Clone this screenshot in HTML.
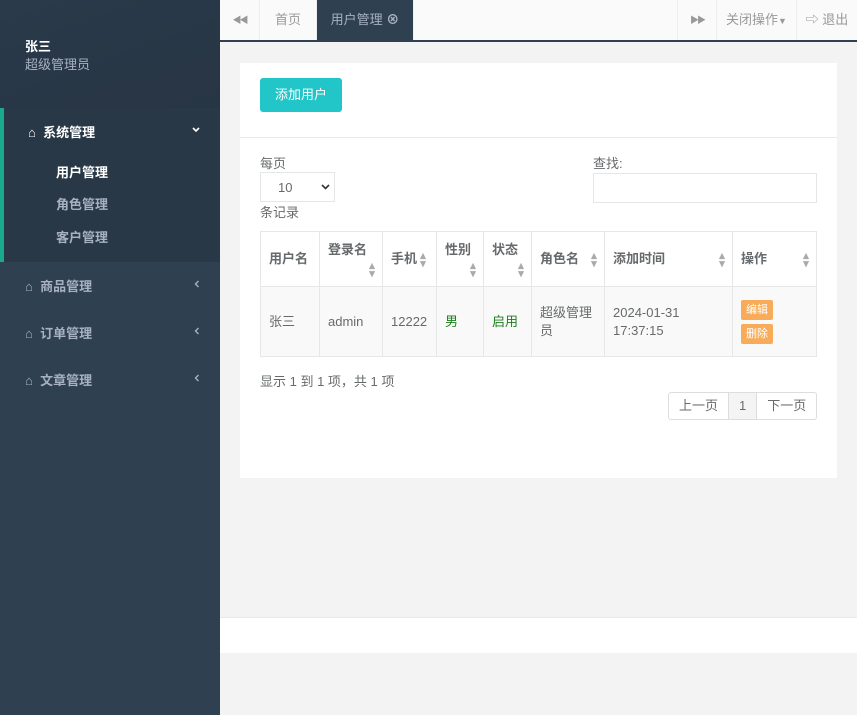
<!DOCTYPE html>
<html><head><meta charset="utf-8"><style>
*{box-sizing:border-box;margin:0;padding:0}
body{width:857px;height:715px;overflow:hidden;font-family:"Liberation Sans","Noto Sans CJK SC",sans-serif;font-size:13px;color:#676a6c;background:#f3f3f4;position:relative}
.side{position:absolute;left:0;top:0;width:220px;height:715px;background:#2f4050}
.prof{height:108px;background:linear-gradient(160deg,#2a3a4a,#273544);padding:38px 25px;line-height:18px}
.prof b{color:#fff;font-size:13px;display:block}
.prof span{color:#a7b1c2;font-size:13px}
.menu{position:absolute;left:0;width:220px;color:#a7b1c2;font-weight:bold;font-size:13px}
.act{top:108px;height:154px;background:#293846;border-left:4px solid #19aa8d}
.item{position:absolute;left:25px}
.arr{position:absolute;right:20px}
.main{position:absolute;left:220px;top:0;width:637px;height:715px}
.tabs{height:42px;background:#fafafa;border-bottom:2px solid #2f4050;position:relative}
.tabs div{position:absolute;top:0;height:40px;line-height:40px;border-right:1px solid #eee;color:#999;font-size:13px;text-align:center}
.panel{position:absolute;left:20px;top:63px;width:597px;height:415px;background:#fff}
.btn{position:absolute;left:20px;top:15px;width:82px;height:34px;background:#23c6c8;color:#fff;border-radius:3px;text-align:center;line-height:34px}
table{position:absolute;left:20px;top:168px;border-collapse:collapse;width:557px;table-layout:fixed}
td,th{border:1px solid #e7e7e7;padding:0 8px;text-align:left;vertical-align:middle;position:relative;line-height:18px}
th{height:55px;font-weight:bold;color:#676a6c}
tr.r td{height:70px;background:#f9f9f9}
.s{position:absolute;right:6px;color:#aaa;font-size:11px;line-height:8px;width:8px;text-align:center}
.lab{display:inline-block;background:#f8ac59;color:#fff;font-size:11px;padding:2px 5px;border-radius:2px;margin:2px 0;line-height:16px}
.foot{position:absolute;left:0;top:617px;width:637px;height:36px;background:#fff;border-top:1px solid #e7eaec}
</style></head><body>
<div class="side">
<div class="prof"><b>张三</b><span>超级管理员</span></div>
<div class="menu act">
<div class="item" style="top:14px;left:24px;color:#fff">⌂&nbsp; 系统管理</div>
<svg class="arr" style="top:19px" width="8" height="6" viewBox="0 0 8 6"><path d="M1 1l3 3 3-3" stroke="#fff" stroke-width="1.6" fill="none"/></svg>
<div class="item" style="top:54px;left:52px;color:#fff">用户管理</div>
<div class="item" style="top:86px;left:52px">角色管理</div>
<div class="item" style="top:119px;left:52px">客户管理</div>
</div>
<div class="menu" style="top:276px"><div class="item">⌂&nbsp; 商品管理</div><svg class="arr" style="top:4px" width="6" height="8" viewBox="0 0 6 8"><path d="M4.5 1l-3 3 3 3" stroke="#a7b1c2" stroke-width="1.4" fill="none"/></svg></div>
<div class="menu" style="top:323px"><div class="item">⌂&nbsp; 订单管理</div><svg class="arr" style="top:4px" width="6" height="8" viewBox="0 0 6 8"><path d="M4.5 1l-3 3 3 3" stroke="#a7b1c2" stroke-width="1.4" fill="none"/></svg></div>
<div class="menu" style="top:370px"><div class="item">⌂&nbsp; 文章管理</div><svg class="arr" style="top:4px" width="6" height="8" viewBox="0 0 6 8"><path d="M4.5 1l-3 3 3 3" stroke="#a7b1c2" stroke-width="1.4" fill="none"/></svg></div>
</div>
<div class="main">
<div class="tabs">
<div style="left:0;width:40px;font-size:9px;letter-spacing:-2px">◀◀</div>
<div style="left:40px;width:57px">首页</div>
<div style="left:97px;width:97px;background:#2f4050;color:#a7b1c2">用户管理 <b style="color:#a7b1c2">⊗</b></div>
<div style="left:457px;width:40px;border-left:1px solid #eee;font-size:9px;letter-spacing:-2px">▶▶</div>
<div style="left:497px;width:80px">关闭操作<span style="font-size:9px">▼</span></div>
<div style="left:577px;width:60px;border-right:none">⇨ 退出</div>
</div>
<div class="panel">
<div class="btn">添加用户</div>
<div style="position:absolute;left:0;top:74px;width:597px;border-top:1px solid #e7eaec"></div>
<div style="position:absolute;left:20px;top:90px">每页</div>
<div style="position:absolute;left:20px;top:109px;width:75px;height:30px;border:1px solid #e5e6e7;padding:7px 17px">10 <svg style="position:absolute;right:4px;top:11px" width="9" height="6" viewBox="0 0 9 6"><path d="M1 1l3.5 3.5L8 1" stroke="#333" stroke-width="1.6" fill="none"/></svg></div>
<div style="position:absolute;left:20px;top:139px">条记录</div>
<div style="position:absolute;left:353px;top:90px">查找:</div>
<div style="position:absolute;left:353px;top:110px;width:224px;height:30px;border:1px solid #e5e6e7"></div>
<table>
<colgroup><col style="width:59px"><col style="width:63px"><col style="width:54px"><col style="width:47px"><col style="width:48px"><col style="width:73px"><col style="width:128px"><col></colgroup>
<tr><th>用户名</th><th style="vertical-align:top;padding-top:9px">登录名<span class="s" style="top:30px">▴<br>▾</span></th><th>手机<span class="s" style="left:36px;top:20px">▴<br>▾</span></th><th style="vertical-align:top;padding-top:9px">性别<span class="s" style="top:30px">▴<br>▾</span></th><th style="vertical-align:top;padding-top:9px">状态<span class="s" style="top:30px">▴<br>▾</span></th><th>角色名<span class="s" style="top:20px">▴<br>▾</span></th><th>添加时间<span class="s" style="top:20px">▴<br>▾</span></th><th>操作<span class="s" style="top:20px">▴<br>▾</span></th></tr>
<tr class="r"><td>张三</td><td>admin</td><td>12222</td><td style="color:#1a7f1a">男</td><td style="color:#1a7f1a">启用</td><td>超级管理员</td><td>2024-01-31 17:37:15</td><td><span class="lab">编辑</span><br><span class="lab">删除</span></td></tr>
</table>
<div style="position:absolute;left:20px;top:308px">显示 1 到 1 项，共 1 项</div>
<div style="position:absolute;left:428px;top:329px;height:28px;border:1px solid #ddd;border-radius:3px;display:flex;line-height:26px">
<span style="padding:0 10px">上一页</span><span style="padding:0 10px;background:#f4f4f4;border-left:1px solid #ddd;border-right:1px solid #ddd">1</span><span style="padding:0 10px">下一页</span></div>
</div>
<div class="foot"></div>
</div>
</body></html>
